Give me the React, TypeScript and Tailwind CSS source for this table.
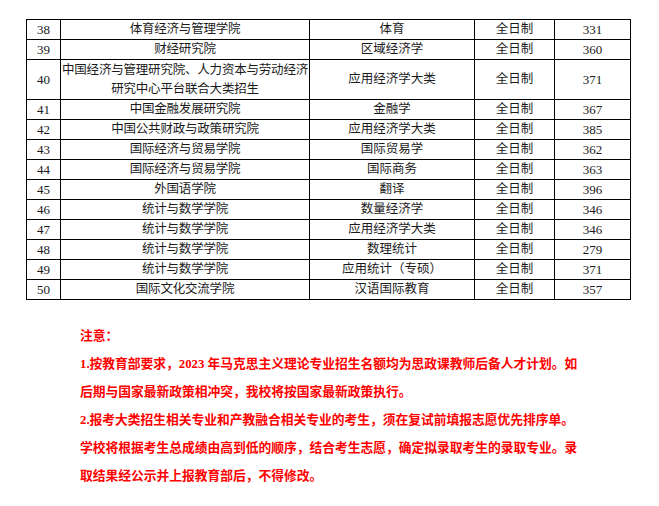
const rows: { no: string; school: string[]; major: string; mode: string; score: string }[] = [
  { no: "38", school: ["体育经济与管理学院"], major: "体育", mode: "全日制", score: "331" },
  { no: "39", school: ["财经研究院"], major: "区域经济学", mode: "全日制", score: "360" },
  {
    no: "40",
    school: ["中国经济与管理研究院、人力资本与劳动经济", "研究中心平台联合大类招生"],
    major: "应用经济学大类",
    mode: "全日制",
    score: "371",
  },
  { no: "41", school: ["中国金融发展研究院"], major: "金融学", mode: "全日制", score: "367" },
  { no: "42", school: ["中国公共财政与政策研究院"], major: "应用经济学大类", mode: "全日制", score: "385" },
  { no: "43", school: ["国际经济与贸易学院"], major: "国际贸易学", mode: "全日制", score: "362" },
  { no: "44", school: ["国际经济与贸易学院"], major: "国际商务", mode: "全日制", score: "363" },
  { no: "45", school: ["外国语学院"], major: "翻译", mode: "全日制", score: "396" },
  { no: "46", school: ["统计与数学学院"], major: "数量经济学", mode: "全日制", score: "346" },
  { no: "47", school: ["统计与数学学院"], major: "应用经济学大类", mode: "全日制", score: "346" },
  { no: "48", school: ["统计与数学学院"], major: "数理统计", mode: "全日制", score: "279" },
  { no: "49", school: ["统计与数学学院"], major: "应用统计（专硕）", mode: "全日制", score: "371" },
  { no: "50", school: ["国际文化交流学院"], major: "汉语国际教育", mode: "全日制", score: "357" },
];

const notes = [
  "注意：",
  "1.按教育部要求，2023 年马克思主义理论专业招生名额均为思政课教师后备人才计划。如",
  "后期与国家最新政策相冲突，我校将按国家最新政策执行。",
  "2.报考大类招生相关专业和产教融合相关专业的考生，须在复试前填报志愿优先排序单。",
  "学校将根据考生总成绩由高到低的顺序，结合考生志愿，确定拟录取考生的录取专业。录",
  "取结果经公示并上报教育部后，不得修改。",
];

export default function App() {
  return (
    <div className="h-[506px] w-[659px] overflow-hidden bg-white pt-[19px] pl-[26px]">
      <table
        className="table-fixed border-collapse text-[12.5px] leading-[19px] text-[#1a1a1a]"
        style={{ fontFamily: '"Liberation Serif", "Noto Sans CJK SC", serif' }}
      >
        <colgroup>
          <col className="w-[34px]" />
          <col className="w-[249px]" />
          <col className="w-[165px]" />
          <col className="w-[80px]" />
          <col className="w-[76px]" />
        </colgroup>
        <tbody>
          {rows.map((r) => (
            <tr key={r.no} className={r.school.length > 1 ? "h-[40px]" : "h-[20px]"}>
              <td className="border border-black p-0 text-center text-[13px]">{r.no}</td>
              <td className="whitespace-nowrap border border-black p-0 text-center tracking-[-0.2px]">
                {r.school.map((s) => (
                  <div key={s}>{s}</div>
                ))}
              </td>
              <td className="whitespace-nowrap border border-black p-0 text-center">{r.major}</td>
              <td className="border border-black p-0 text-center">{r.mode}</td>
              <td className="border border-black p-0 text-center text-[13px]">{r.score}</td>
            </tr>
          ))}
        </tbody>
      </table>
      <div
        className="mt-[22px] ml-[54px] flex flex-col text-[12.75px] font-bold leading-[28px] text-[#ff0000]"
        style={{ fontFamily: '"Liberation Serif", "Noto Sans CJK SC", serif' }}
      >
        {notes.map((n) => (
          <p key={n} className="whitespace-nowrap">
            {n}
          </p>
        ))}
      </div>
    </div>
  );
}
